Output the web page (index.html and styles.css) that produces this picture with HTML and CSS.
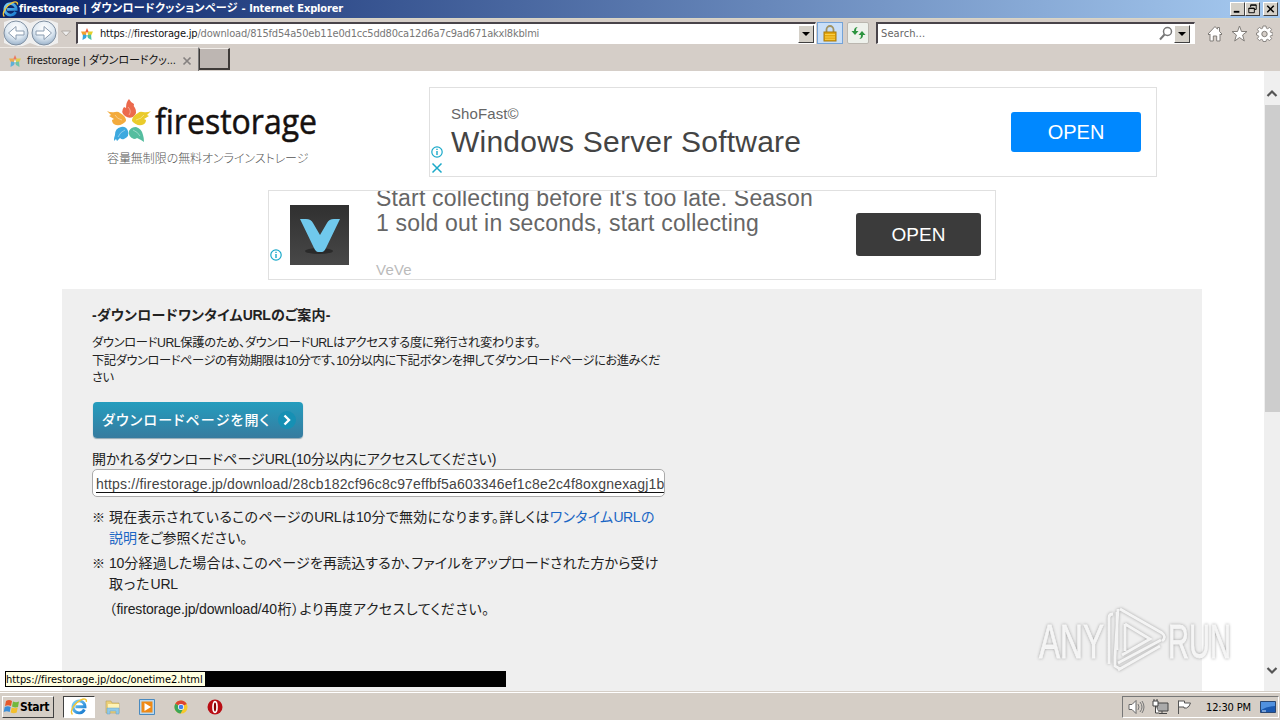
FILE: index.html
```html
<!DOCTYPE html>
<html lang="ja">
<head>
<meta charset="utf-8">
<title>firestorage</title>
<link rel="stylesheet" href="styles.css">
</head>
<body>
<svg width="0" height="0" class="defs">
  <defs>
    <linearGradient id="ieg" x1="0" y1="0" x2="1" y2="1"><stop offset="0" stop-color="#7fd4fa"/><stop offset="1" stop-color="#1377cd"/></linearGradient>
    <radialGradient id="nav" cx=".5" cy=".3" r=".75"><stop offset="0" stop-color="#fff"/><stop offset=".55" stop-color="#dfe9f2"/><stop offset="1" stop-color="#8fa9c4"/></radialGradient>
    <symbol id="ie" viewBox="0 0 18 18">
      <path d="M14.4 11.5A6 6 0 1 1 15 8.8H5.4" fill="none" stroke="url(#ieg)" stroke-width="2.9"/>
      <path d="M2.5 16.5C-1 13 5 4.500 11 1.800c3-1.400 6-1 5.300 2" fill="none" stroke="#f4c534" stroke-width="1.400"/>
    </symbol>
    <symbol id="star" viewBox="0 0 12 12">
      <path d="M6 0 8 4.500H4z" fill="#f2603e"/><path d="M0 3.500h4.500L6 7 2 7.800z" fill="#f5a02c"/><path d="M12 3.500H7.500L6 7l4 .8z" fill="#e5cf2a"/><path d="M2 6.500 6 7l-1 3-3.500 2z" fill="#35a5e0"/><path d="M10 6.500 6 7l1 3 3.500 2z" fill="#4cc0a0"/><circle cx="6" cy="6.500" r="1" fill="#fff"/>
    </symbol>
    <symbol id="info" viewBox="0 0 12 12"><circle cx="6" cy="6" r="5.200" fill="#fff" stroke="#1aa9c9" stroke-width="1.200"/><path d="M6 5v4M6 2.700v1.400" stroke="#1aa9c9" stroke-width="1.400"/></symbol>
  </defs>
</svg>
<div class="screen">
  <header class="titlebar">
    <svg class="i17"><use href="#ie"/></svg>
    <span class="fit title">firestorage | ダウンロードクッションページ - Internet Explorer</span>
    <div class="winbtns">
      <span class="wb"><svg viewBox="0 0 14 12"><path d="M3 9h6" stroke="#000" stroke-width="2"/></svg></span>
      <span class="wb"><svg viewBox="0 0 14 12"><path d="M5 4V1.500h6v5H9M5 2h6M3 5h6v5H3zM3 5.500h6" fill="none" stroke="#000"/></svg></span>
      <span class="wb close"><svg viewBox="0 0 14 12"><path d="M3.500 2.500l7 7M10.500 2.500l-7 7" stroke="#000" stroke-width="1.600"/></svg></span>
    </div>
  </header>

  <div class="toolbar">
    <svg class="nav" width="74" height="28" viewBox="0 0 74 28">
      <path d="M2 3Q15-3 28 4 42-3 56 4V24Q42 31 28 24 15 31 2 24z" fill="#efefef"/>
      <circle cx="14" cy="14" r="12" fill="url(#nav)" stroke="#8191a3"/><circle cx="42" cy="14" r="12" fill="url(#nav)" stroke="#8191a3"/>
      <path d="M22 12h-8V7.500L6.500 14l7.500 6.500V16h8z" fill="#fff" stroke="#8a9cb0"/><path d="M34 12h8V7.500l7.500 6.500-7.500 6.500V16h-8z" fill="#fff" stroke="#8a9cb0"/>
      <path d="M59.500 12h9L64 17z" fill="#eee" stroke="#b0aaa4"/>
    </svg>
    <div class="address">
      <svg class="i12"><use href="#star"/></svg>
      <span class="url"><b>https</b>://<b>firestorage.jp</b>/download/815fd54a50eb11e0d1cc5dd80ca12d6a7c9ad671akxl8kblmi</span>
      <span class="drop"></span>
    </div>
    <span class="tool lock"><svg width="14" height="17" viewBox="0 0 14 17"><path d="M3.500 8V4.500a3.500 3.500 0 0 1 7 0V8" fill="none" stroke="#a19362" stroke-width="1.800"/><rect x="1" y="7" width="12" height="9" fill="#e5a70d" stroke="#a97b0b"/><path d="M2 9.500h10M2 12h10M2 14.300h10" stroke="#f8cf4a"/></svg></span>
    <span class="tool refresh"><svg width="15" height="14" viewBox="0 0 15 14"><path d="M7 1Q5 1.500 5 5h2.500L4 9 .5 5H3Q3 1 7 1z" fill="#2d9440"/><path d="M8 13q2-.5 2-4H7.500L11 5l3.500 4H12q0 4-4 4z" fill="#2d9440"/></svg></span>
    <div class="search"><span class="ph">Search...</span>
      <svg width="14" height="15" viewBox="0 0 14 15"><circle cx="8.500" cy="5.500" r="4" fill="none" stroke="#777" stroke-width="1.500"/><path d="M5.500 8.500 1 13.500" stroke="#777" stroke-width="2"/></svg>
      <span class="drop"></span></div>
    <div class="cmds">
      <svg width="16" height="17" viewBox="0 0 16 17"><path d="M1 9l7-7.500 2.500 2.700V2.500h2v4L15 9l-1 1-1-1v7H9.700v-5H6.300v5H3V9l-1 1z" fill="#fff" stroke="#817d79"/></svg>
      <svg width="17" height="17" viewBox="0 0 17 17"><path d="M8.500 1l2 5.500H16L11.600 10l1.700 6-4.800-3.500L3.700 16l1.700-6L1 6.500h5.500z" fill="#fff" stroke="#817d79"/></svg>
      <svg width="17" height="17" viewBox="0 0 17 17"><path d="M7 1h3l.4 2.200 1.300.5L13.600 2.400l2 2-1.300 1.900.5 1.200L17 8v2l-2.200.5-.5 1.200 1.300 1.900-2 2-1.900-1.300-1.300.5L10 16.500H7l-.4-1.700-1.300-.5-1.900 1.300-2-2 1.300-1.900-.5-1.200L.5 10V8l1.700-.5.5-1.200L1.400 4.400l2-2 1.900 1.300 1.300-.5z" fill="#fff" stroke="#817d79" stroke-width=".9"/><circle cx="8.500" cy="9" r="2.700" fill="#d5cec8" stroke="#817d79"/></svg>
    </div>
  </div>

  <div class="tabs">
    <div class="tab"><svg class="i12 pale"><use href="#star"/></svg><span class="fit tabtext">firestorage | ダウンロードクッ...</span>
      <svg width="10" height="10" viewBox="0 0 10 10"><path d="M1.500 1.500l7 7M8.500 1.500l-7 7" stroke="#858180" stroke-width="1.700"/></svg></div>
    <div class="newtab"></div>
  </div>

  <div class="viewport">
    <main class="page">
      <div class="top">
        <div class="brand">
          <svg class="logo" width="214" height="46" viewBox="0 0 214 46">
            <path d="M22 0q2 4 5 5-1 2 1 4 3 5-2 9-4 2-8-1-5-4-1-9l2 1q0-6 3-9z" fill="#ec6a4d"/>
            <path d="M0 12q4 2 8 1 3-1 5 1 6 3 6 8-4 5-10 4-4-1-4-5l2-1-5-3 2-1z" fill="#f3ab3d"/>
            <path d="M44 12q-4 2-8 1-3-1-5 1-6 3-6 8 4 5 10 4 4-1 4-5l-2-1 5-3-2-1z" fill="#eacb2b"/>
            <path d="M7 42q0-4 1-6 0-7 6-8 5-1 7 4 2 5-4 8-2 1-4-1l-3 3-1-2z" fill="#3da9df"/>
            <path d="M37 43q0-4-1-7-1-6-7-8-5 0-7 4-1 6 5 8 2 0 3-1l4 2z" fill="#55bd9f"/>
            <g fill="none" stroke="#fff" stroke-opacity=".4"><path d="M22 16q3-4-1-8M15 21q-5-1-7-5M29 21q5-1 8-5M18 31q-5 2-7 7M26 31q5 2 7 6"/></g>
            <text x="48" y="35" class="wordmark" textLength="162" lengthAdjust="spacingAndGlyphs">firestorage</text>
          </svg>
          <span class="fit tagline">容量無制限の無料オンラインストレージ</span>
        </div>
        <div class="ad ad1">
          <div class="marks"><svg class="i12"><use href="#info"/></svg><svg class="i12" viewBox="0 0 12 12"><path d="M1.500 1.500l9 9M10.500 1.500l-9 9" stroke="#1aa9c9" stroke-width="1.500"/></svg></div>
          <div class="adtext"><span class="adv">ShoFast©</span><span class="adh">Windows Server Software</span></div>
          <span class="open blue">OPEN</span>
        </div>
      </div>
      <div class="ad ad2">
        <div class="marks"><svg class="i12"><use href="#info"/></svg></div>
        <svg class="veve" width="59" height="60" viewBox="0 0 59 60"><defs><linearGradient id="vb" x2="0" y2="1"><stop stop-color="#303030"/><stop offset="1" stop-color="#484848"/></linearGradient></defs><rect width="59" height="60" fill="url(#vb)"/><ellipse cx="29" cy="46" rx="14" ry="3" fill="#2a2a2a"/><path d="M10 14h6q5 0 7 4l7 12 7-12q2-4 7-4h6L36 43q-2 4-4 4h-4q-2 0-4-4z" fill="#70c9ed"/></svg>
        <div class="adtext"><span class="copy">Start collecting before it's too late. Season<br>1 sold out in seconds, start collecting</span><span class="by">VeVe</span></div>
        <span class="open dark">OPEN</span>
      </div>
      <section class="panel">
        <h1 class="fit">-ダウンロードワンタイムURLのご案内-</h1>
        <div class="lead"><p class="fit l1">ダウンロードURL保護のため、ダウンロードURLはアクセスする度に発行され変わります。</p><p class="fit l2">下記ダウンロードページの有効期限は10分です、10分以内に下記ボタンを押してダウンロードページにお進みくだ</p><p class="fit l3">さい</p></div>
        <a class="go"><span class="fit">ダウンロードページを開く</span><svg width="20" height="20" viewBox="0 0 20 20"><circle cx="10" cy="10" r="9" fill="#1690b4"/><path d="M7.500 5.500 12 10l-4.500 4.500" fill="none" stroke="#fff" stroke-width="2.400"/></svg></a>
        <p class="fit label">開かれるダウンロードページURL(10分以内にアクセスしてください)</p>
        <div class="field"><span>https://firestorage.jp/download/28cb182cf96c8c97effbf5a603346ef1c8e2c4f8oxgnexagj1b</span></div>
        <ul>
          <li><i>※</i><div><p class="fit n1">現在表示されているこのページのURLは10分で無効になります。詳しくは<a>ワンタイムURLの</a></p><p class="fit n2"><a>説明</a>をご参照ください。</p></div></li>
          <li><i>※</i><div><p class="fit n3">10分経過した場合は、このページを再読込するか、ファイルをアップロードされた方から受け</p><p class="fit n4">取ったURL</p><p class="fit n5">（firestorage.jp/download/40桁）より再度アクセスしてください。</p></div></li>
        </ul>
      </section>
    </main>
    <div class="scroll">
      <svg width="16" height="34" viewBox="0 0 16 34"><path d="M3.500 25 8 20.500l4.500 4.500" fill="none" stroke="#555" stroke-width="2.200"/></svg>
      <div class="thumb"></div>
      <svg class="down" width="16" height="34" viewBox="0 0 16 34"><path d="M3.500 10 8 14.500l4.500-4.500" fill="none" stroke="#555" stroke-width="2.200"/></svg>
    </div>
  </div>

  <footer class="taskbar">
    <div class="start"><svg width="17" height="16" viewBox="0 0 17 16"><path d="M3 2q3-2 6 0L8 7Q5 5.500 2 7z" fill="#e5592b"/><path d="M10 2.500q3 1.500 6 0L15 8q-3 1-6-.5z" fill="#72b83c"/><path d="M1.700 8q3-1.500 6 0l-1 5q-3-1.500-6 0z" fill="#3b8ed8"/><path d="M8.700 8.500q3 1.500 6 0l-1 5q-3 1.500-6 0z" fill="#f4bf2c"/></svg><b>Start</b></div>
    <div class="task on"><svg width="18" height="18"><use href="#ie"/></svg></div>
    <div class="task"><svg width="18" height="17" viewBox="0 0 18 17"><path d="M2 2h5l1 2h7v10H2z" fill="#ecd079" stroke="#b9a15a" stroke-width=".6"/><path d="M4 5h11v4H4z" fill="#fff3b5"/><path d="M3 15V9h12v6h-3v-3H6v3z" fill="#8fc9e8" stroke="#6aa3c4" stroke-width=".5"/></svg></div>
    <div class="task"><svg width="16" height="16" viewBox="0 0 16 16"><path d="M.5.5h15v15H.5z" fill="#b8d8f0" stroke="#4a8abf"/><path d="M2.500 2.500h11v11h-11z" fill="#ef8a16"/><path d="M5.500 4v8L12 8z" fill="#fff"/></svg></div>
    <div class="task"><svg width="14" height="14" viewBox="0 0 16 16"><circle cx="8" cy="8" r="7.500" fill="#f7c92b"/><path d="M8 8 1.500 4.200A7.500 7.500 0 0 1 14.500 4.500z" fill="#dc4434"/><path d="M8 8 1.500 4.200A7.500 7.500 0 0 0 7.500 15.500L11 9z" fill="#3ba559"/><circle cx="8" cy="8" r="3.500" fill="#fff"/><circle cx="8" cy="8" r="2.700" fill="#4382ed"/></svg></div>
    <div class="task"><svg width="16" height="16" viewBox="0 0 16 16"><circle cx="8" cy="8" r="7.500" fill="#b90d14"/><ellipse cx="8" cy="8" rx="2" ry="5.300" fill="#870000" stroke="#fff" stroke-width="1.700"/></svg></div>
    <div class="tray">
      <svg width="17" height="16" viewBox="0 0 17 16"><path d="M1 5.500h3l4-4v13l-4-4H1z" fill="#fff" stroke="#666"/><path d="M10 5q2 3 0 6M12 3q4 5 0 10M14 2q4 6 0 12" fill="none" stroke="#777"/></svg>
      <svg width="17" height="16" viewBox="0 0 17 16"><path d="M5 4h11v8H5zM7 14.500h8M10 12v3" fill="#aaa" stroke="#444"/><path d="M1 2h5v5H1zM2 0v2M5 0v2M3.500 7v7H7" fill="#fff" stroke="#444"/></svg>
      <svg width="17" height="16" viewBox="0 0 17 16"><path d="M2.500 15V1.500" stroke="#555"/><path d="M2.500 2h6v2h6q-1 4-4 5H8V8H2.500z" fill="#fff" stroke="#555"/></svg>
      <span class="clock">12:30 PM</span>
      <svg width="16" height="13" viewBox="0 0 16 13"><path d="M.5.500h15v11H.5z" fill="#1b59b0" stroke="#2a4772"/><path d="M1 1h14v4Q7 5 1 9z" fill="#5191df"/><path d="M2 10h4" stroke="#d4e8fc"/></svg>
    </div>
  </footer>

  <div class="status"><span>https://firestorage.jp/doc/onetime2.html</span></div>
  <svg class="watermark" width="214" height="72" viewBox="0 0 214 72">
    <g class="wm">
      <text x="5" y="54" textLength="65" lengthAdjust="spacingAndGlyphs">ANY</text>
      <text x="134" y="54" textLength="63" lengthAdjust="spacingAndGlyphs">RUN</text>
      <path d="M75 60V14q0-4 4-4M83 8v38M86 5l42 24q5 4 0 8M84 59l43-23M86 65l-5-3V53L84 5M91 20l25 15-28 16M84 66l42-24M91 20v27" />
    </g>
  </svg>
</div>
</body>
</html>
```
FILE: styles.css
```css
* { box-sizing: border-box; }
body { margin: 0; background: #fff; font-family: "Liberation Sans", "Noto Sans CJK JP", sans-serif; color: #222; }
p, h1, ul { margin: 0; padding: 0; }
svg { flex: none; display: block; }
.defs { position: absolute; }
.screen { position: relative; width: 1280px; height: 720px; display: flex; flex-direction: column; overflow: hidden; }
.fit { display: block; white-space: nowrap; font-feature-settings: "palt"; text-align-last: justify; letter-spacing: -.4px; }
.i12 { width: 12px; height: 12px; }
.i17 { width: 17px; height: 17px; }

.titlebar, .toolbar, .tabs, .taskbar, .status { font-family: "DejaVu Sans Condensed", "DejaVu Sans", "Noto Sans CJK JP", sans-serif; font-stretch: condensed; font-size: 11px; }
.titlebar { height: 18px; display: flex; align-items: center; padding: 0 2px; background: linear-gradient(90deg, #0a246a, #a6caf0); color: #fff; }
.title { width: 324px; font-weight: bold; letter-spacing: -.15px; line-height: 18px; }
.winbtns { margin-left: auto; display: flex; }
.wb { width: 15px; height: 14px; background: #d4d0c8; border: 1px solid; border-color: #fff #404040 #404040 #fff; }
.wb svg { width: 13px; height: 12px; }
.close { margin-left: 3px; }

.toolbar { height: 29px; display: flex; align-items: center; background: #d5cec8; border-top: 1px solid #d9d5c4; padding: 0 7px 0 2px; }
.address, .search { height: 22px; background: #fff; border: 1px solid; border-color: #49444a #fff #fff #49444a; border-width: 2px 1px 1px 2px; display: flex; align-items: center; }
.address { width: 740px; padding: 0 1px 0 3px; }
.url { margin-left: 7px; color: #777; white-space: nowrap; letter-spacing: -.18px; }
.url b { font-weight: normal; color: #111; }
.drop { margin-left: auto; width: 16px; height: 18px; background: #d4d0c8; border: 1px solid; border-color: #fff #404040 #404040 #fff; display: flex; align-items: center; justify-content: center; }
.drop::after { content: ""; border: 4px solid transparent; border-top-color: #000; border-bottom: 0; }
.tool { height: 22px; display: flex; align-items: center; justify-content: center; }
.lock { width: 26px; margin-left: 1px; background: #c9dff8; border: 1px solid #74a3d8; }
.refresh { width: 22px; margin-left: 4px; background: #eef1ec; border: 1px solid #bbb7b0; border-radius: 2px; }
.search { width: 319px; margin-left: 7px; padding: 0 4px 0 3px; }
.ph { color: #666; letter-spacing: .1px; margin-right: auto; }
.search .drop { margin-left: 1px; }
.cmds { margin-left: auto; display: flex; gap: 8px; }

.tabs { height: 24px; display: flex; background: #d5cec8; }
.tab { width: 199px; display: flex; align-items: center; padding: 2px 6px 0 9px; border-top: 1px solid #eee9e4; border-right: 1px solid #777; }
.tabtext { width: 146px; margin: 0 9px 0 6px; color: #111; line-height: 18px; letter-spacing: -.1px; }
.pale { opacity: .75; }
.newtab { width: 31px; height: 22px; margin-top: 1px; background: #bdb6b2; border: 1px solid #f1ede9; border-width: 1px 2px 2px 1px; border-color: #f1ede9 #3e3a38 #3e3a38 #3e3a38; }

.viewport { flex: 1; min-height: 0; display: flex; background: #fff; overflow: hidden; }
.page { width: 1264px; padding-top: 16px; }
.top { display: flex; height: 90px; padding-left: 107px; }
.brand { width: 322px; padding-top: 12px; }
.logo, .watermark { overflow: visible; }
.wordmark { font-family: "Open Sans", "Noto Sans", sans-serif; font-size: 34px; fill: #16110f; stroke: #16110f; stroke-width: .5px; }
.tagline { width: 201px; font-size: 12px; line-height: 18px; margin-top: 5px; color: #555; font-weight: 300; }
.ad { width: 728px; height: 90px; border: 1px solid #e0e0e0; display: flex; overflow: hidden; }
.marks { width: 21px; padding-left: 1px; display: flex; flex-direction: column; justify-content: flex-end; gap: 4px; }
.ad1 .marks { padding-bottom: 2px; }
.ad2 .marks { padding-bottom: 18px; }
.adtext { display: flex; flex-direction: column; white-space: nowrap; }
.adv { font-size: 15px; line-height: 16px; margin-top: 18px; color: #666; letter-spacing: .1px; }
.adh { font-size: 30px; line-height: 34px; margin-top: 3px; color: #444; letter-spacing: .22px; }
.open { margin-left: auto; margin-right: 15px; border-radius: 3px; color: #fff; text-align: center; font-size: 20px; }
.blue { width: 130px; height: 40px; margin-top: 24px; line-height: 40px; background: #0088ff; }
.dark { width: 125px; height: 43px; margin-top: 22px; line-height: 43px; background: #3b3b3b; margin-right: 14px; font-size: 19px; }
.ad2 { margin: 13px 0 9px 268px; }
.veve { margin-top: 14px; }
.ad2 .adtext { margin-left: 27px; }
.copy { font-size: 23px; line-height: 25px; margin-top: -5px; color: #666; letter-spacing: .18px; }
.by { font-size: 15px; line-height: 18px; margin-top: 25px; color: #bbb; letter-spacing: .2px; }
.panel { width: 1140px; height: 420px; margin-left: 62px; background: #efefef; padding: 16px 30px; }
h1 { width: 238px; font-size: 14px; line-height: 20px; }
.lead { margin: 10px 0 14px; font-size: 12.300px; line-height: 17.500px; }
.lead .fit { letter-spacing: -.57px; }
.l1 { width: 448px; } .l2 { width: 568px; } .l3 { width: 20px; }
.go { width: 210px; height: 36px; margin-left: 1px; border-radius: 4px; padding: 0 6px 0 9px; display: flex; align-items: center; justify-content: space-between; color: #fff; font-size: 14px; font-weight: 500; background: linear-gradient(#249dbe, #367b9f); box-shadow: 0 1px 1px #8fa7b3; }
.go .fit { width: 167px; padding-bottom: 2px; }
.label { width: 404px; margin-top: 11px; font-size: 14px; line-height: 20px; }
.field { width: 573px; height: 28px; background: #fff; border: 1px solid #aaa; border-radius: 5px; padding-left: 3px; overflow: hidden; line-height: 28px; font-size: 14px; white-space: nowrap; color: #444; }
.field span { letter-spacing: .185px; text-decoration: underline; text-decoration-color: #111; text-underline-offset: 3px; text-decoration-skip-ink: none; }
ul { list-style: none; font-size: 14px; line-height: 21px; margin-top: 10px; }
li { display: flex; margin-bottom: 4px; }
li i { width: 17px; font-style: normal; font-size: 13px; }
li a { color: #1a66c4; }
.n1 { width: 545px; } .n2 { width: 138px; } .n3 { width: 549px; } .n4 { width: 69px; } .n5 { width: 380px; margin-top: 4px; }
.n4, .n5 { letter-spacing: -.15px; }
.scroll { width: 16px; background: #efefef; display: flex; flex-direction: column; }
.thumb { height: 307px; background: #cdcdcd; margin: 0 0 0 1px; }
.down { margin-top: auto; }

.taskbar { height: 28px; display: flex; align-items: center; background: #d5cec6; border-top: 1px solid #fff; box-shadow: 0 -1px #d5cec6; padding: 2px 1px 1px 2px; }
.start { width: 52px; height: 22px; border: 1px solid; border-color: #fff #404040 #404040 #fff; display: flex; align-items: center; color: #000; font-size: 12px; letter-spacing: -.3px; }
.task { width: 34px; height: 22px; display: flex; align-items: center; justify-content: center; }
.on { width: 32px; margin: 0 1px 0 9px; background: #fff; border: 1px solid; border-color: #404040 #fff #fff #404040; }
.tray { width: 157px; height: 22px; margin-left: auto; border: 1px solid; border-color: #777 #fff #fff #777; display: flex; align-items: center; gap: 7px; padding-left: 5px; color: #000; }
.clock { width: 46px; margin: 0 1px 0 6px; white-space: nowrap; letter-spacing: -.15px; }

.status { position: absolute; left: 5px; top: 671px; width: 501px; height: 16px; background: #000; }
.status span { display: block; width: 199px; height: 14px; margin: 1px; line-height: 15px; background: #ffffe1; color: #000; white-space: nowrap; letter-spacing: -.05px; }
.watermark { position: absolute; left: 1034px; top: 604px; filter: drop-shadow(0 0 1.500px #999); }
.wm { fill: #fcfcfc; stroke: #fcfcfc; stroke-width: .8; opacity: .9; font-family: "Liberation Sans Narrow", "Liberation Sans", sans-serif; font-size: 49px; }
.wm path { fill: none; stroke: #fafafa; stroke-width: 2.800; }
```
